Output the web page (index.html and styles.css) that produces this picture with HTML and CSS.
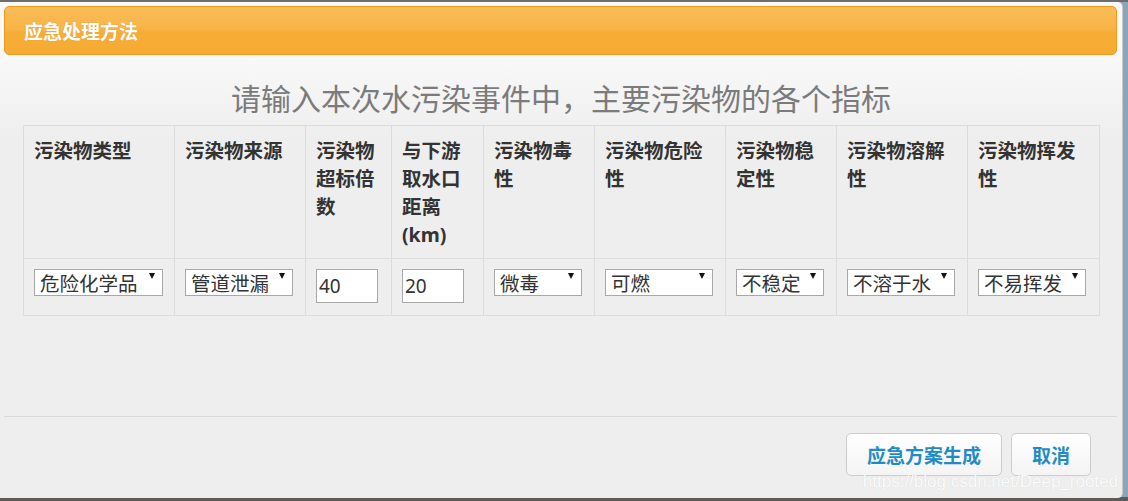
FILE: index.html
```html
<!DOCTYPE html>
<html lang="zh-CN">
<head>
<meta charset="utf-8">
<title>应急处理方法</title>
<link rel="stylesheet" href="styles.css">
</head>
<body>
<div class="dialog">
  <div class="dlg-header"><span class="dlg-title">应急处理方法</span></div>
  <h2 class="prompt">请输入本次水污染事件中，主要污染物的各个指标</h2>
  <table class="grid">
    <colgroup>
      <col class="c151"><col class="c131"><col class="c86"><col class="c92"><col class="c111"><col class="c131"><col class="c111"><col class="c131"><col class="c132">
    </colgroup>
    <thead>
      <tr>
        <th>污染物类型</th>
        <th>污染物来源</th>
        <th>污染物超标倍数</th>
        <th>与下游取水口距离(km)</th>
        <th>污染物毒性</th>
        <th>污染物危险性</th>
        <th>污染物稳定性</th>
        <th>污染物溶解性</th>
        <th>污染物挥发性</th>
      </tr>
    </thead>
    <tbody>
      <tr>
        <td><div class="sel w129"><select><option>危险化学品</option></select></div></td>
        <td><div class="sel w108"><select><option>管道泄漏</option></select></div></td>
        <td><input class="num" type="text" value="40"></td>
        <td><input class="num" type="text" value="20"></td>
        <td><div class="sel w88"><select><option>微毒</option></select></div></td>
        <td><div class="sel w108"><select><option>可燃</option></select></div></td>
        <td><div class="sel w88"><select><option>不稳定</option></select></div></td>
        <td><div class="sel w108"><select><option>不溶于水</option></select></div></td>
        <td><div class="sel w108"><select><option>不易挥发</option></select></div></td>
      </tr>
    </tbody>
  </table>
  <div class="dlg-footer">
    <button class="btn" type="button">应急方案生成</button>
    <button class="btn" type="button">取消</button>
  </div>
  <div class="watermark">https://blog.csdn.net/Deep_rooted</div>
</div>
</body>
</html>
```

FILE: styles.css
```css
* { box-sizing: border-box; }

html, body {
  margin: 0;
  padding: 0;
  width: 1128px;
  height: 501px;
  overflow: hidden;
}

body {
  background: linear-gradient(to bottom, #6e6e6e 0, #6e6e6e 2px, #8ea4b7 2px, #8ea4b7 497px, #5e5a55 497px);
  font-family: "Noto Sans", "Noto Sans CJK SC", sans-serif;
  padding-top: 2px;
}

.dialog {
  position: relative;
  width: 1123px;
  height: 496px;
  display: flex;
  flex-direction: column;
  background: linear-gradient(to bottom, #f9f9f9 50px, #eeeeee 140px, #eeeeee 100%);
  border-right: 1px solid #c9c9c9;
  border-radius: 0 5px 5px 0;
}

.dlg-header {
  margin: 4px 5px 0 4px;
  height: 49px;
  border: 1px solid #ec9a1c;
  border-radius: 5px;
  background: linear-gradient(to bottom, #f9bc58 0, #f8b448 45%, #f6ad36 55%, #f6ac33 100%);
  display: flex;
  align-items: center;
  padding-left: 19px;
}

.dlg-title {
  color: #ffffff;
  font-family: "Noto Sans CJK SC", sans-serif;
  font-weight: 700;
  font-size: 19px;
  line-height: 22px;
  text-shadow: 0 0 1px rgba(180, 100, 0, 0.4);
}

.prompt {
  margin: 22px 0 8px;
  text-align: center;
  font-family: "Noto Sans CJK SC", sans-serif;
  font-weight: 400;
  font-size: 30px;
  line-height: 40px;
  color: #7b7b7b;
}

.grid {
  margin-left: 23px;
  width: 1076px;
  table-layout: fixed;
  border-collapse: collapse;
  border: 1px solid #dcdcdc;
}

.c151 { width: 151px; }
.c131 { width: 131px; }
.c86 { width: 86px; }
.c92 { width: 92px; }
.c111 { width: 111px; }
.c132 { width: 132px; }

.grid th,
.grid td {
  border: 1px solid #dcdcdc;
  text-align: left;
  vertical-align: top;
}

.grid th {
  padding: 11px 8px 8px 10px;
  height: 133px;
  font-family: "Noto Sans", "Noto Sans CJK SC", sans-serif;
  font-weight: 700;
  font-size: 19.5px;
  line-height: 28px;
  color: #333333;
}

.grid td {
  padding: 10px 4px 11px 10px;
  height: 57px;
}

.sel {
  position: relative;
  display: inline-block;
  vertical-align: top;
}

.sel::after {
  content: "";
  position: absolute;
  right: 8px;
  top: 4px;
  border-left: 3.5px solid transparent;
  border-right: 3.5px solid transparent;
  border-top: 6px solid #111111;
  pointer-events: none;
}

.w129 { width: 129px; }
.w108 { width: 108px; }
.w88 { width: 88px; }

.sel select {
  -webkit-appearance: none;
  appearance: none;
  display: block;
  width: 100%;
  height: 27px;
  margin: 0;
  padding: 0 0 0 5px;
  border: 1px solid #a8a8a8;
  border-radius: 0;
  background: #ffffff;
  font-family: "Noto Sans CJK SC", sans-serif;
  font-size: 19.5px;
  line-height: 25px;
  color: #333333;
  outline: none;
}

.num {
  display: block;
  width: 62px;
  height: 34px;
  margin: 0;
  padding: 0 0 0 2px;
  border: 1px solid #a8a8a8;
  border-radius: 0;
  background: #ffffff;
  font-family: "Noto Sans", sans-serif;
  font-size: 19px;
  color: #333333;
  outline: none;
}

.dlg-footer {
  margin: auto 5px 0 4px;
  height: 82px;
  border-top: 1px solid #dadada;
  display: flex;
  justify-content: flex-end;
  align-items: flex-start;
  gap: 9px;
  padding: 16px 26px 0 0;
}

.btn {
  height: 43px;
  padding: 0 20px;
  margin: 0;
  border: 1px solid #cccccc;
  border-radius: 5px;
  background: linear-gradient(to bottom, #ffffff 0, #f4f4f4 100%);
  font-family: "Noto Sans CJK SC", sans-serif;
  font-weight: 700;
  font-size: 19px;
  line-height: 41px;
  color: #1f8dc4;
  cursor: pointer;
}

.watermark {
  position: absolute;
  right: 4px;
  bottom: 6px;
  font-family: "Liberation Sans", Arial, sans-serif;
  font-size: 17px;
  line-height: 20px;
  color: #fbfbfb;
  text-shadow: 0 0 1px rgba(0, 0, 0, 0.12);
  pointer-events: none;
}
```
